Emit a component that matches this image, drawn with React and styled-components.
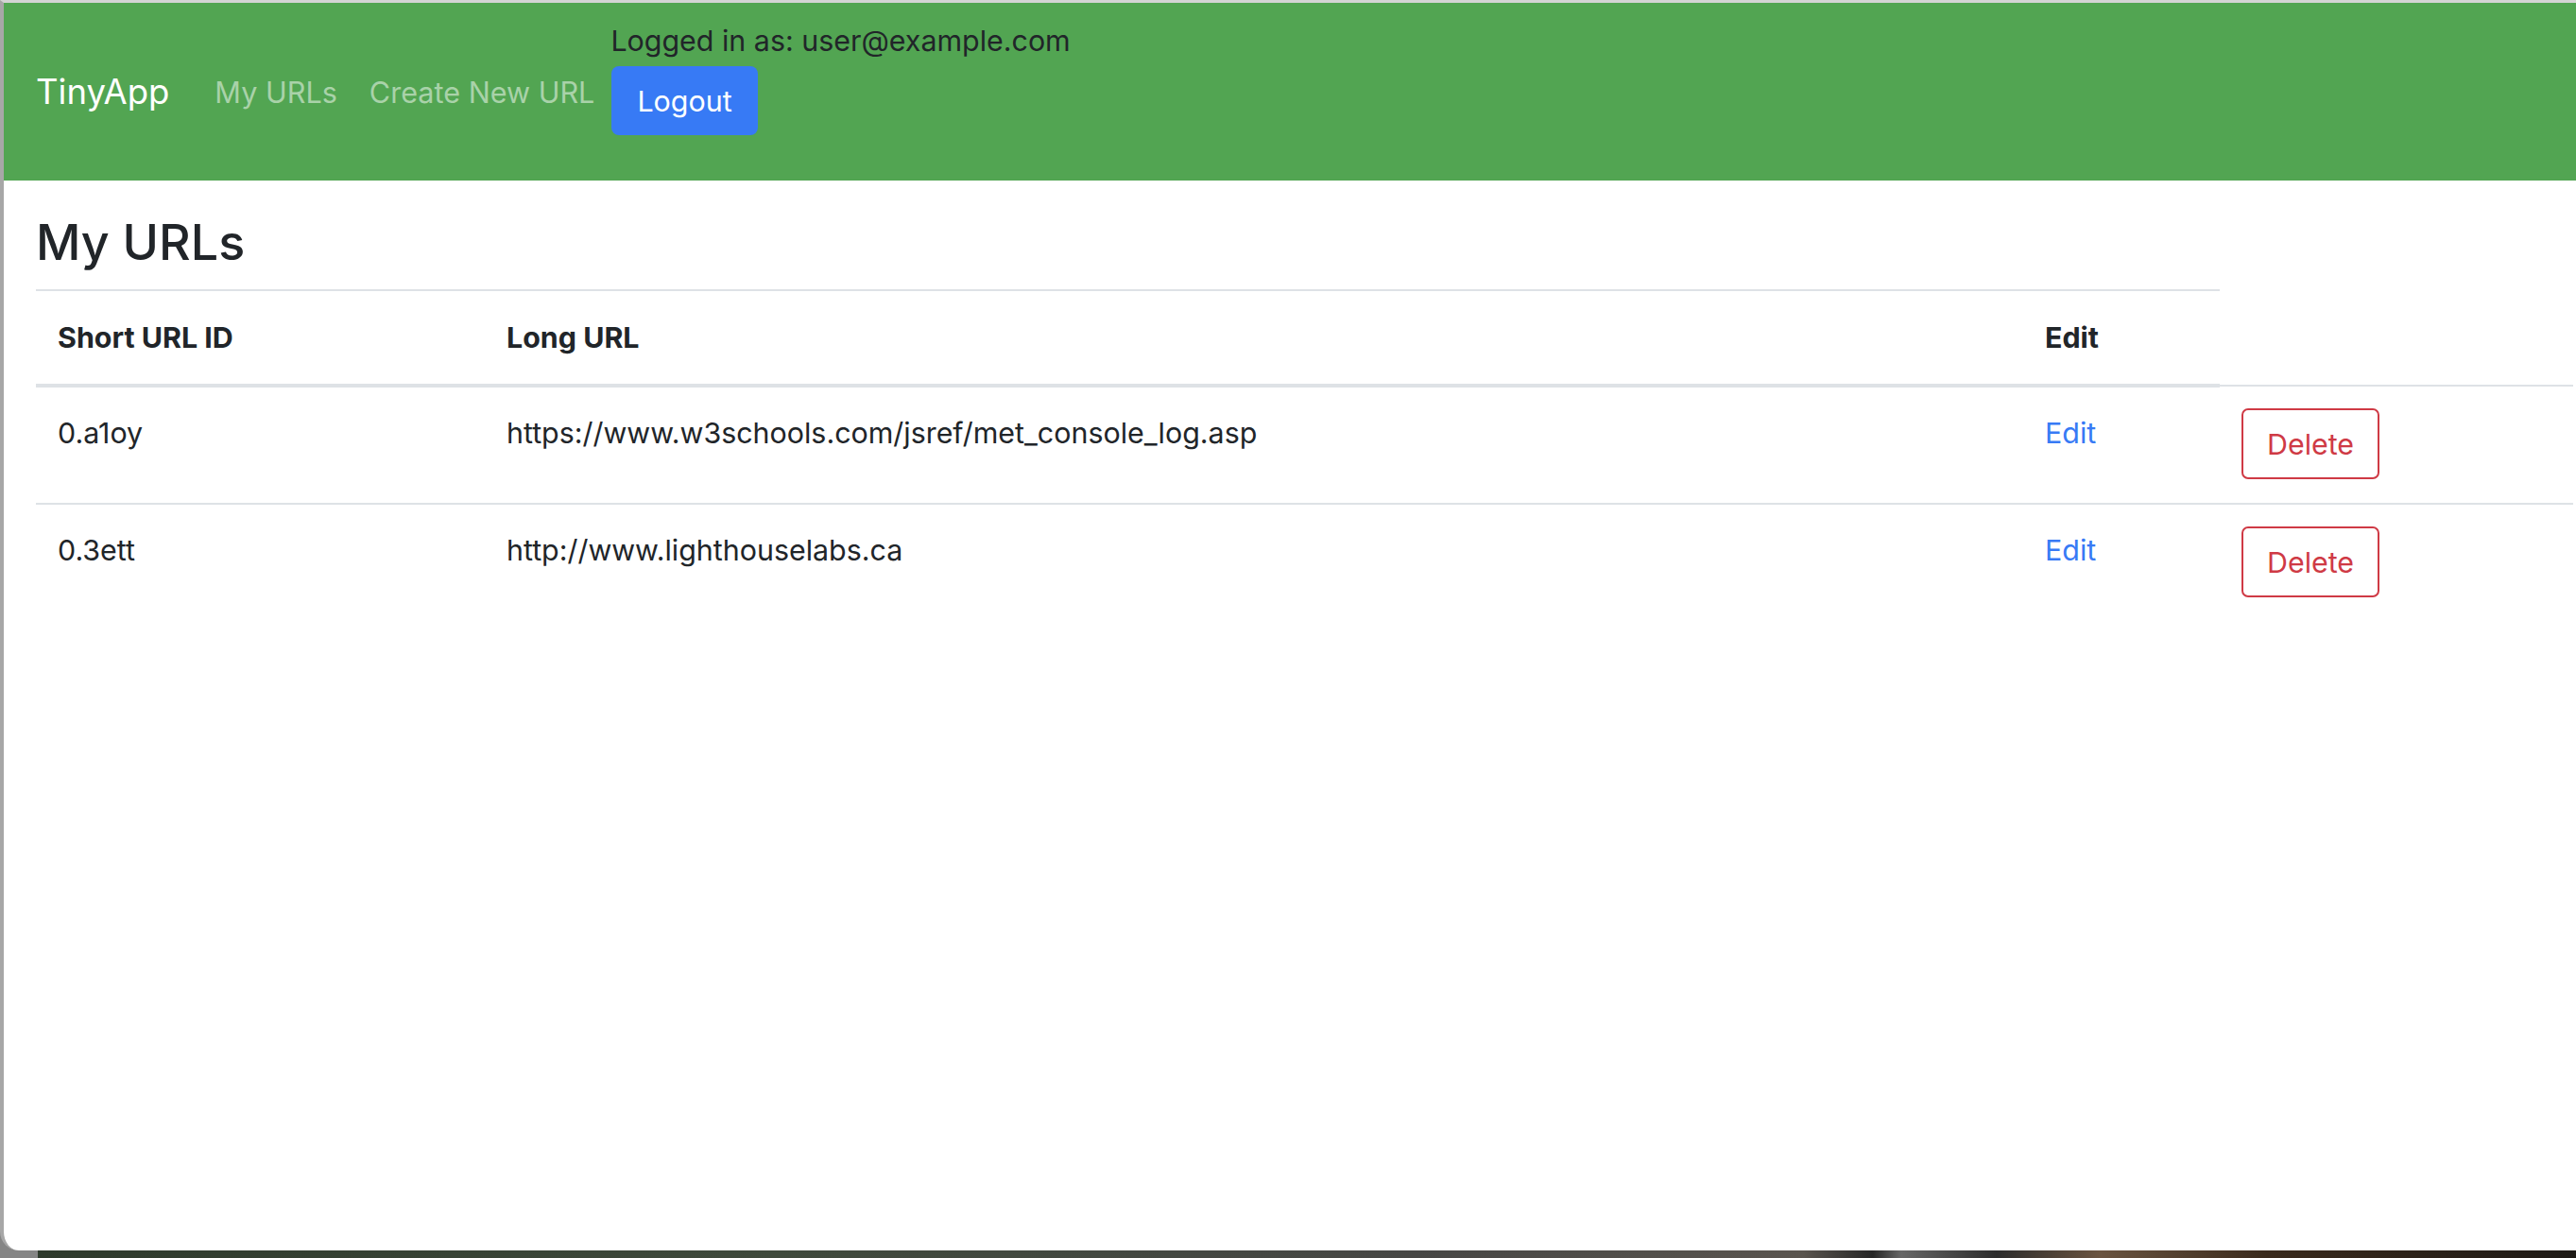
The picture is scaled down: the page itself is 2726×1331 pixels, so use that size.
import React from 'react';
import styled, { createGlobalStyle } from 'styled-components';

const GlobalStyle = createGlobalStyle`
    html, body {
        margin: 0;
        padding: 0;
    }
    body {
        font-family: Inter, "Noto Sans", "Liberation Sans", sans-serif;
        color: #212529;
        background: #808080;
    }
`;

const Screen = styled.div`
    width: 2726px;
    height: 1331px;
    overflow: hidden;
    background: linear-gradient(
        to right,
        #858585 0 40px,
        #2e3a2c 40px,
        #3f4a3c 30%,
        #474745 55%,
        #5a554f 70%,
        #262626 72.7%,
        #676767 73.8%,
        #2c2c2c 77.5%,
        #6a5440 81.5%,
        #3a2a1c 88%,
        #1e1a16 100%
    );
`;

const Window = styled.div`
    height: 1320px;
    background: #ffffff;
    border-top: 3px solid #d4d4d4;
    border-left: 4px solid #a7a7a7;
    border-bottom-left-radius: 20px;
    overflow: hidden;
`;

const Navbar = styled.nav`
    height: 188px;
    background: #52a552;
    display: flex;
    align-items: center;
    padding: 0 34px;
`;

const Brand = styled.a`
    font-size: 36.5px;
    color: #ffffff;
    text-decoration: none;
    margin-right: 48px;
`;

const NavLinks = styled.div`
    display: flex;
    gap: 34px;
    margin-right: 17px;
`;

const NavLink = styled.a`
    font-size: 30.6px;
    color: #a9d2a9;
    text-decoration: none;
`;

const UserBlock = styled.div`
    align-self: flex-start;
    margin-top: 19px;
    display: flex;
    flex-direction: column;
    align-items: flex-start;
`;

const UserText = styled.div`
    font-size: 30.4px;
    line-height: 43px;
    color: #212529;
`;

const LogoutButton = styled.button`
    margin-top: 5px;
    margin-left: 1px;
    height: 73px;
    padding: 0 27px;
    font-family: inherit;
    font-size: 30.4px;
    color: #ffffff;
    background: #377af5;
    border: none;
    border-radius: 8px;
`;

const Main = styled.main`
    padding: 31px 0 0 34px;
`;

const Heading = styled.h2`
    margin: 0 0 15px;
    font-size: 52px;
    font-weight: 500;
    line-height: 69px;
`;

const Table = styled.table`
    width: 2685px;
    border-collapse: collapse;
    table-layout: fixed;
    font-size: 30.4px;
    line-height: 43px;
`;

const HeadCell = styled.th`
    text-align: left;
    font-weight: 700;
    padding: 28px 23px 27px;
    border-top: 2px solid #dee2e6;
    border-bottom: 4px solid #dee2e6;
`;

const Cell = styled.td`
    vertical-align: top;
    padding: 27px 23px 25px;
    border-top: 2px solid #dee2e6;
`;

const EditLink = styled.a`
    color: #377af5;
    text-decoration: none;
`;

const DeleteButton = styled.button`
    height: 75px;
    padding: 0 25px;
    margin-top: -4px;
    font-family: inherit;
    font-size: 30.4px;
    color: #cf3a45;
    background: #ffffff;
    border: 2px solid #cf3a45;
    border-radius: 7px;
`;

const urls = [
    { id: '0.a1oy', long: 'https://www.w3schools.com/jsref/met_console_log.asp' },
    { id: '0.3ett', long: 'http://www.lighthouselabs.ca' }
];

export default function App() {
    return (
        <Screen>
            <GlobalStyle />
            <Window>
                <Navbar>
                    <Brand href="#">TinyApp</Brand>
                    <NavLinks>
                        <NavLink href="#">My URLs</NavLink>
                        <NavLink href="#">Create New URL</NavLink>
                    </NavLinks>
                    <UserBlock>
                        <UserText>Logged in as: user@example.com</UserText>
                        <LogoutButton>Logout</LogoutButton>
                    </UserBlock>
                </Navbar>
                <Main>
                    <Heading>My URLs</Heading>
                    <Table>
                        <colgroup>
                            <col style={{ width: 475 }} />
                            <col style={{ width: 1628 }} />
                            <col style={{ width: 208 }} />
                            <col style={{ width: 374 }} />
                        </colgroup>
                        <thead>
                            <tr>
                                <HeadCell>Short URL ID</HeadCell>
                                <HeadCell>Long URL</HeadCell>
                                <HeadCell>Edit</HeadCell>
                            </tr>
                        </thead>
                        <tbody>
                            {urls.map(url => (
                                <tr key={url.id}>
                                    <Cell>{url.id}</Cell>
                                    <Cell>{url.long}</Cell>
                                    <Cell>
                                        <EditLink href="#">Edit</EditLink>
                                    </Cell>
                                    <Cell>
                                        <DeleteButton>Delete</DeleteButton>
                                    </Cell>
                                </tr>
                            ))}
                        </tbody>
                    </Table>
                </Main>
            </Window>
        </Screen>
    );
}
